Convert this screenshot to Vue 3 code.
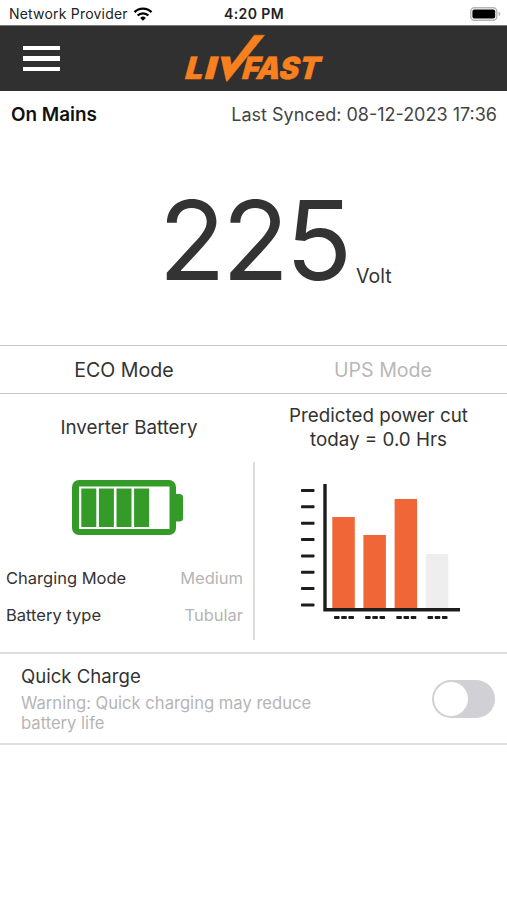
<template>
  <div class="screen">
    <!-- Status bar -->
    <div class="status-bar">
      <div class="carrier">
        <span class="carrier-name">Network Provider</span>
        <svg class="wifi" viewBox="0 0 20 14">
          <path d="M1.5 5.2 A12 12 0 0 1 18.5 5.2" />
          <path d="M4.6 8.5 A7.8 7.8 0 0 1 15.4 8.5" />
          <path class="wifi-dot" d="M7.2 10.9 A4 4 0 0 1 12.8 10.9 L10 13.7 Z" />
        </svg>
      </div>
      <span class="clock">4:20 PM</span>
      <svg class="phone-battery" viewBox="0 0 31 14">
        <rect x="0.8" y="0.8" width="26" height="12.4" rx="3.6" fill="#fff" stroke="#b5b5b5" stroke-width="1.4" />
        <rect x="2.4" y="2.4" width="22.8" height="9.2" rx="2" fill="#000" />
        <path d="M28.6 4.8 Q30.4 5.4 30.4 7 Q30.4 8.6 28.6 9.2 Z" fill="#b5b5b5" />
      </svg>
    </div>

    <!-- App header -->
    <header class="app-header">
      <button class="menu-btn" aria-label="Menu">
        <span></span>
        <span></span>
        <span></span>
      </button>
      <svg class="logo" viewBox="0 0 148 65">
        <g transform="translate(0 53.2) skewX(-15)">
          <text x="3.4" y="0" textLength="18" lengthAdjust="spacingAndGlyphs">L</text>
          <text x="23" y="0" textLength="11.5" lengthAdjust="spacingAndGlyphs">I</text>
          <text x="60.5" y="0" textLength="77" lengthAdjust="spacingAndGlyphs">FAST</text>
        </g>
        <path d="M41 30.7 H50 L51.3 39 L74.3 9.2 H84.5 L47.3 55.3 H46.4 Z" />
      </svg>
    </header>

    <div class="sync-row">
      <span class="supply">On Mains</span>
      <span class="synced">Last Synced: 08-12-2023 17:36</span>
    </div>

    <div class="voltage">
      <span class="voltage-value">{{ voltage }}</span>
      <span class="voltage-unit">Volt</span>
    </div>

    <div class="modes">
      <div
        v-for="mode in modes"
        :key="mode"
        class="mode"
        :class="{ active: mode === activeMode }"
        @click="activeMode = mode"
      >{{ mode }}</div>
    </div>

    <div class="panels">
      <section class="panel battery-panel">
        <h2 class="battery-title">Inverter Battery</h2>
        <svg class="battery-icon" viewBox="0 0 112 56">
          <rect x="0" y="0" width="104" height="55" rx="7" fill="#349a28" />
          <rect x="101" y="14" width="10" height="27.5" rx="3.5" fill="#349a28" />
          <rect x="7" y="6.5" width="90.5" height="42.5" fill="#fff" />
          <rect
            v-for="n in 4"
            :key="n"
            :x="9.3 + (n - 1) * 17.6"
            y="8.5"
            width="15"
            height="38.5"
            fill="#349a28"
          />
        </svg>
        <dl class="details">
          <div v-for="item in details" :key="item.label" class="detail">
            <dt>{{ item.label }}</dt>
            <dd>{{ item.value }}</dd>
          </div>
        </dl>
      </section>

      <section class="panel forecast-panel">
        <h2 class="forecast-title">Predicted power cut<br />today = 0.0 Hrs</h2>
        <svg class="chart" viewBox="0 0 160 138">
          <!-- Scale ticks -->
          <rect
            v-for="n in 8"
            :key="'tick' + n"
            x="1"
            :y="5 + (n - 1) * 16.35"
            width="13.5"
            height="3"
            rx="0.8"
            fill="#1c1c1c"
          />
          <g v-for="bar in bars" :key="bar.x">
            <rect :x="bar.x" :y="bar.y" width="22.5" :height="124 - bar.y" :fill="bar.color" />
            <rect
              v-for="n in 3"
              :key="n"
              :x="bar.x + 1.7 + (n - 1) * 7.2"
              y="132"
              width="5.6"
              height="3"
              rx="0.8"
              fill="#1c1c1c"
            />
          </g>
          <path d="M25 0 V125.8 H160" fill="none" stroke="#1c1c1c" stroke-width="3.4" />
        </svg>
      </section>
    </div>

    <div class="quick-charge">
      <div class="quick-text">
        <div class="quick-title">Quick Charge</div>
        <div class="quick-warning">Warning: Quick charging may reduce<br />battery life</div>
      </div>
      <button
        class="toggle"
        :class="{ on: quickCharge }"
        aria-label="Quick Charge"
        @click="quickCharge = !quickCharge"
      >
        <span class="knob"></span>
      </button>
    </div>
  </div>
</template>

<script setup>
import { ref } from 'vue'

const voltage = ref(225)
const modes = ['ECO Mode', 'UPS Mode']
const activeMode = ref('ECO Mode')
const quickCharge = ref(false)

const details = [
  { label: 'Charging Mode', value: 'Medium' },
  { label: 'Battery type', value: 'Tubular' }
]

const bars = [
  { x: 32.3, y: 33, color: '#f06637' },
  { x: 63.4, y: 51, color: '#f06637' },
  { x: 94.6, y: 15, color: '#f06637' },
  { x: 125.8, y: 70, color: '#eeeeee' }
]
</script>

<style>
body {
  margin: 0;
  background: #fff;
}
</style>

<style scoped>
.screen {
  width: 507px;
  height: 900px;
  background: #fff;
  color: #333;
  font-family: Inter, 'Liberation Sans', sans-serif;
  overflow: hidden;
}

.status-bar {
  display: grid;
  grid-template-columns: 1fr auto 1fr;
  align-items: center;
  height: 25px;
  padding: 2px 6px 0 9px;
  box-sizing: border-box;
  color: #222;
  font-size: 14px;
}

.carrier {
  display: flex;
  align-items: center;
  gap: 5px;
}

.carrier-name {
  letter-spacing: 0.2px;
  white-space: nowrap;
}

.wifi {
  width: 20px;
  height: 14px;
  fill: none;
  stroke: #000;
  stroke-width: 2.4;
}

.wifi-dot {
  fill: #000;
  stroke: none;
}

.clock {
  margin-right: 2px;
  font-weight: 600;
  letter-spacing: 0.4px;
}

.phone-battery {
  justify-self: end;
  width: 31px;
  height: 14px;
}

.app-header {
  display: flex;
  align-items: center;
  height: 66px;
  padding-left: 23px;
  box-sizing: border-box;
  background: #303030;
  border-top: 1px solid #777;
}

.menu-btn {
  display: flex;
  flex-direction: column;
  gap: 6px;
  width: 37px;
  padding: 0;
  border: 0;
  background: none;
}

.menu-btn span {
  height: 4.6px;
  background: #fff;
}

.logo {
  width: 148px;
  height: 65px;
  margin-left: 120px;
  fill: #f9801f;
  stroke: #f9801f;
  stroke-width: 0.5;
  font-size: 30.5px;
  font-weight: 900;
}

.sync-row {
  display: flex;
  justify-content: space-between;
  align-items: center;
  height: 46px;
  padding: 0 10px 0 11px;
}

.supply {
  color: #111;
  font-size: 18.9px;
  font-weight: 600;
}

.synced {
  color: #444;
  font-size: 18px;
}

.voltage {
  display: flex;
  justify-content: center;
  align-items: baseline;
  height: 208px;
  padding: 36px 0 0 43px;
  box-sizing: border-box;
  gap: 7px;
}

.voltage-value {
  font-size: 110px;
  font-weight: 400;
  letter-spacing: -3.5px;
  line-height: 134px;
}

.voltage-unit {
  position: relative;
  top: 3px;
  font-size: 19.5px;
}

.modes {
  display: grid;
  grid-template-columns: 248px 1fr;
  height: 49px;
  box-sizing: border-box;
  border-top: 1.5px solid #c6c6c6;
  border-bottom: 1.5px solid #c6c6c6;
}

.mode {
  display: flex;
  align-items: center;
  justify-content: center;
  color: #b8b8b8;
  font-size: 19.6px;
}

.mode:last-child {
  padding-left: 11px;
}

.mode.active {
  color: #333;
}

.panels {
  display: grid;
  grid-template-columns: 255px 252px;
  height: 258px;
}

h2 {
  margin: 0;
  font-size: 18.8px;
  font-weight: 400;
  text-align: center;
}

.battery-panel {
  display: flex;
  flex-direction: column;
  background: linear-gradient(#ddd, #ddd) right 68px / 2px 178px no-repeat;
}

.battery-title {
  padding-top: 22px;
  padding-left: 3px;
  line-height: 24px;
}

.battery-icon {
  width: 112px;
  height: 56px;
  margin: 40px 0 0 72px;
}

.details {
  margin: 23px 12px 0 6px;
  font-size: 16.5px;
}

.detail {
  display: flex;
  justify-content: space-between;
  align-items: center;
  height: 37px;
}

.detail dd {
  margin: 0;
  color: #b5b5b5;
}

.forecast-title {
  padding: 10px 5px 0 0;
  line-height: 23.5px;
}

.chart {
  display: block;
  width: 160px;
  height: 138px;
  margin: 33px 0 0 45px;
}

.quick-charge {
  display: flex;
  justify-content: space-between;
  align-items: center;
  height: 93px;
  padding: 0 12px 0 21px;
  box-sizing: border-box;
  border-top: 2px solid #ddd;
  border-bottom: 2px solid #ddd;
}

.quick-title {
  font-size: 18.6px;
  line-height: 24px;
}

.quick-warning {
  margin-top: 5px;
  color: #b5b5b5;
  font-size: 16.6px;
  line-height: 20.5px;
}

.toggle {
  width: 63px;
  height: 38px;
  padding: 2px;
  border: 0;
  border-radius: 19px;
  background: #d1d0d5;
}

.toggle.on {
  background: #349a28;
}

.knob {
  display: block;
  width: 34px;
  height: 34px;
  border-radius: 50%;
  background: #fff;
}

.toggle.on .knob {
  margin-left: auto;
}
</style>
